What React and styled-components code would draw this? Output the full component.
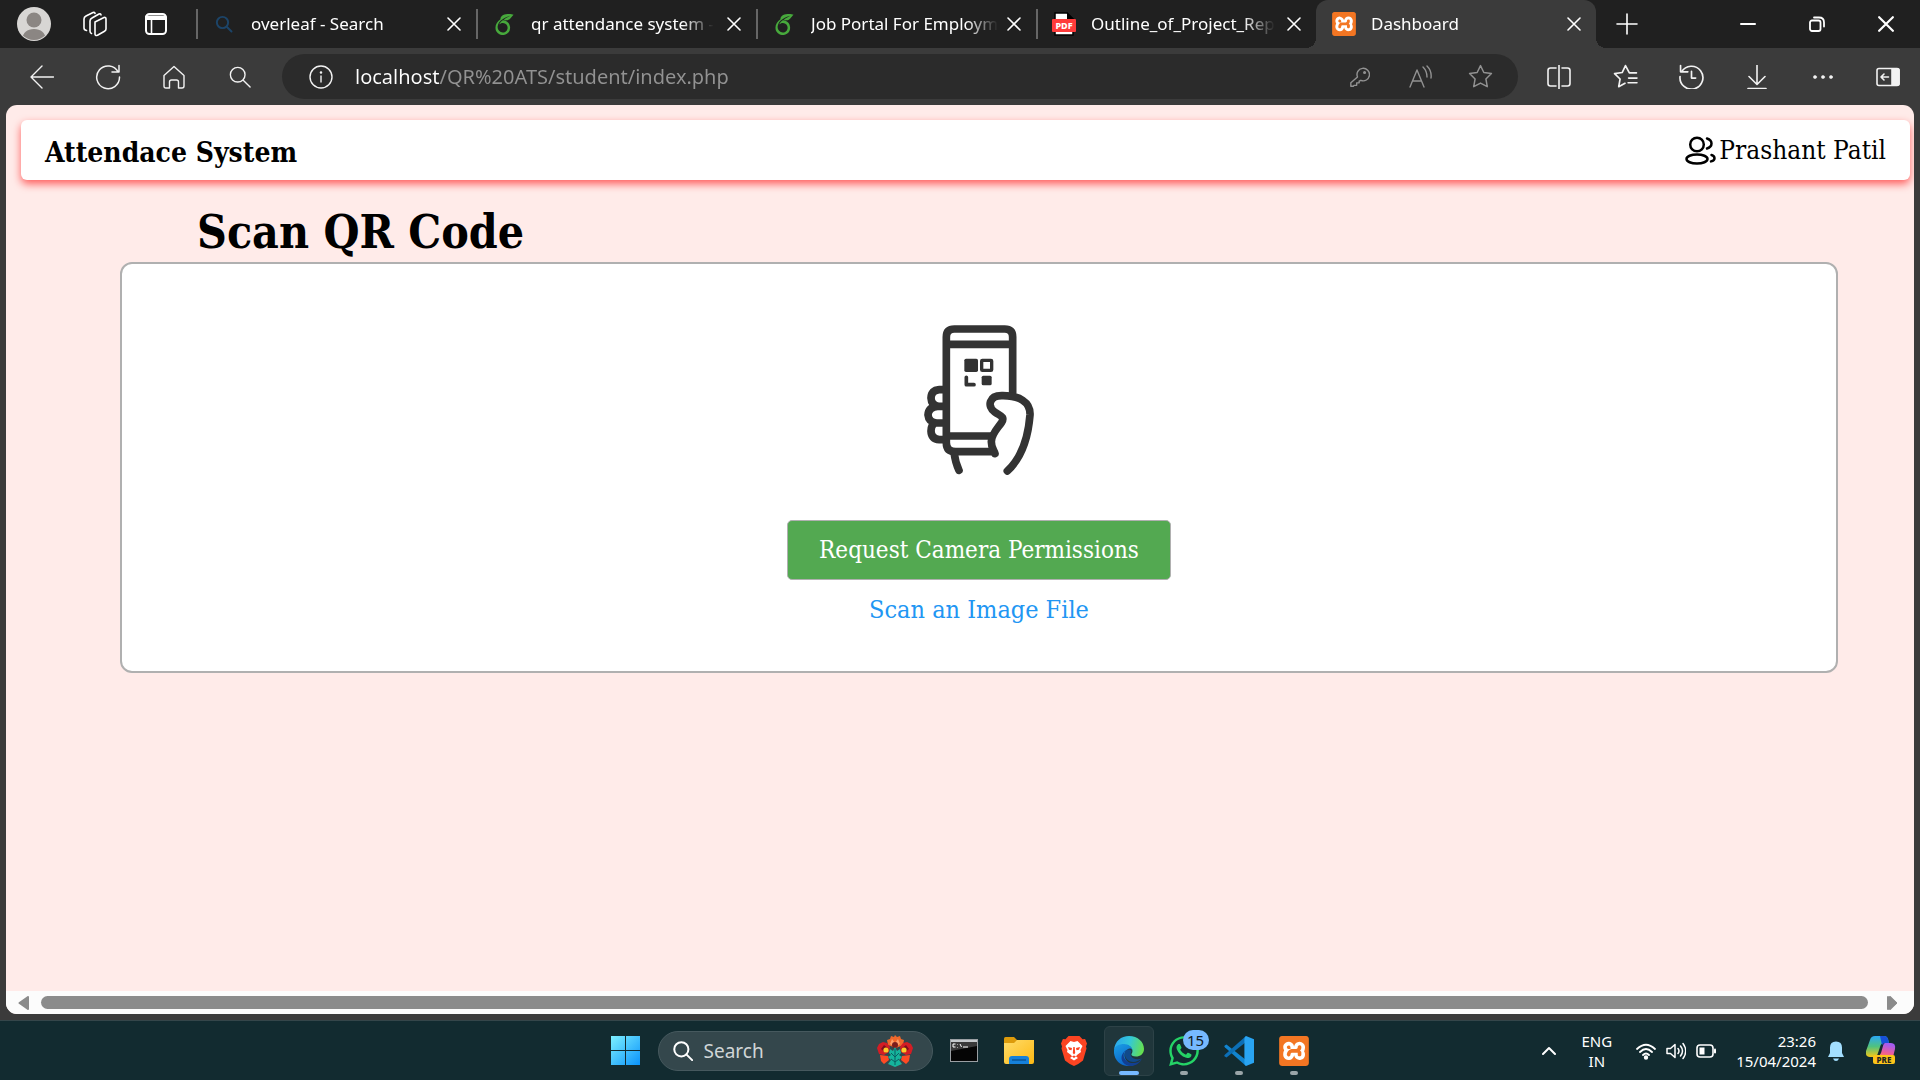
import React from 'react';
import styled, { createGlobalStyle, css } from 'styled-components';
import { SiXampp, SiOverleaf } from 'react-icons/si';
import { FaWhatsapp } from 'react-icons/fa';

const ui = `"Noto Sans", "Open Sans", sans-serif`;
const serif = `"DejaVu Serif Condensed", "DejaVu Serif", serif`;

const Global = createGlobalStyle`
  * { box-sizing: border-box; }
  body { margin: 0; background: #3b3b3b; font-family: ${ui}; overflow: hidden; }
  button, input { font: inherit; color: inherit; border: 0; padding: 0; margin: 0; background: none; outline: none; }
  button { cursor: pointer; }
  h1, h2, p { margin: 0; }
  svg { display: block; flex: none; }
`;

const Screen = styled.div`
  height: 100vh;
  display: flex;
  flex-direction: column;
  background: #3b3b3b;
`;

/* ---------- browser chrome ---------- */

const TabStrip = styled.header`
  height: 48px;
  flex: none;
  display: flex;
  align-items: stretch;
  background: #202020;
  color: #fff;
  padding-left: 3px;
`;

const StripButton = styled.button`
  width: ${(p) => p.$w || 61}px;
  display: flex;
  align-items: center;
  justify-content: center;
`;

const Tabs = styled.nav`
  display: grid;
  grid-template-columns: repeat(5, minmax(0, 1fr));
  flex: 0 1 1400px;
  min-width: 0;
  margin-left: 10px;
`;

const Tab = styled.div`
  position: relative;
  min-width: 0;
  display: flex;
  align-items: center;
  padding-left: ${(p) => (p.$active ? 15 : 0)}px;
  border-radius: 12px 12px 0 0;
  ${(p) =>
    p.$active &&
    css`
      background: #3b3b3b;
      &::before,
      &::after {
        content: '';
        position: absolute;
        bottom: 0;
        width: 10px;
        height: 10px;
      }
      &::before {
        left: -10px;
        background: radial-gradient(circle at 0 0, #202020 10px, #3b3b3b 10px);
      }
      &::after {
        right: -10px;
        background: radial-gradient(circle at 100% 0, #202020 10px, #3b3b3b 10px);
      }
    `}
`;

const TabDivider = styled.span`
  width: 2px;
  height: 30px;
  margin-right: 13px;
  background: #666;
`;

const TabLabel = styled.button`
  flex: 1;
  min-width: 0;
  height: 100%;
  display: flex;
  align-items: center;
  gap: 14px;
  text-align: left;
`;

const Favicon = styled.span`
  width: 26px;
  display: flex;
  justify-content: center;
  flex: none;
`;

const TabText = styled.span`
  flex: 1;
  white-space: nowrap;
  font-size: 17px;
  line-height: 24px;
  mask-image: linear-gradient(90deg, #000 calc(100% - 32px), transparent);
`;

const TabClose = styled.button`
  width: 40px;
  height: 32px;
  margin-right: 2px;
  display: flex;
  align-items: center;
  justify-content: center;
`;

const Grow = styled.span`
  flex: 1;
`;

const Toolbar = styled.div`
  height: 57px;
  flex: none;
  display: flex;
  align-items: center;
  padding-left: 9px;
  color: #f2f2f2;
`;

const ToolButton = styled.button`
  width: ${(p) => p.$w || 66}px;
  height: 44px;
  flex: none;
  display: flex;
  align-items: center;
  justify-content: center;
`;

const AddressBar = styled.label`
  flex: 1;
  height: 45px;
  margin: 0 8px 0 9px;
  padding: 0 8px 0 27px;
  display: flex;
  align-items: center;
  border-radius: 24px;
  background: #2b2b2b;
`;

const AddressInput = styled.input`
  flex: 1;
  min-width: 0;
  margin: 0 22px;
  font-size: 20px;
  line-height: 28px;
  color: #9a9a9a;
  background: linear-gradient(90deg, #fff 85px, #929292 85px);
  background-clip: text;
  -webkit-text-fill-color: transparent;
`;

const AddressButton = styled(ToolButton)`
  width: 60px;
  color: #929292;
`;

/* ---------- web page ---------- */

const Viewport = styled.div`
  flex: 1;
  min-height: 0;
  margin: 0 6px 6px;
  display: flex;
  flex-direction: column;
  border-radius: 11px;
  overflow: hidden;
  background: #ffebe9;
  color: #000;
  font-family: ${serif};
`;

const Page = styled.main`
  flex: 1;
  min-height: 0;
  padding: 15px 4px 0 15px;
`;

const Navbar = styled.header`
  height: 60px;
  padding: 0 24px;
  display: flex;
  align-items: center;
  justify-content: space-between;
  border-radius: 6px;
  background: #fff;
  box-shadow: 0 4px 8px rgba(255, 0, 0, 0.6);
`;

const Brand = styled.h2`
  font-size: 28px;
  line-height: 40px;
  font-weight: 700;
  padding-top: 6px;
`;

const User = styled.a`
  display: flex;
  align-items: center;
  gap: 3px;
  font-size: 26px;
  line-height: 36px;
  color: #000;
  text-decoration: none;
`;

const Scanner = styled.section`
  margin: 22px 72px 0 99px;
`;

const Heading = styled.h1`
  padding-left: 77px;
  font-size: 46px;
  line-height: 60px;
  font-weight: 700;
`;

const Card = styled.div`
  display: flex;
  flex-direction: column;
  align-items: center;
  padding: 61px 20px 43px;
  border: 2px solid #b0b0b0;
  border-radius: 12px;
  background: #fff;
`;

const CameraButton = styled.button`
  height: 60px;
  margin-top: 45px;
  padding: 0 31px;
  border: 1px solid #b0b0b0;
  border-radius: 5px;
  background: #53a951;
  color: #fff;
  font-size: 24px;
  line-height: 36px;
`;

const FileLink = styled.a`
  margin-top: 12px;
  color: #2196f3;
  font-size: 25px;
  line-height: 36px;
  text-decoration: none;
`;

const Scrollbar = styled.div`
  height: 23px;
  flex: none;
  display: flex;
  align-items: center;
  background: #fcfcfc;
`;

const ScrollArrow = styled.button`
  width: ${(p) => p.$w}px;
  height: 23px;
  display: flex;
  align-items: center;
  justify-content: center;
`;

const Thumb = styled.div`
  flex: 1;
  height: 13px;
  border-radius: 7px;
  background: #8b8b8b;
`;

/* ---------- taskbar ---------- */

const Taskbar = styled.footer`
  height: 60px;
  flex: none;
  display: grid;
  grid-template-columns: 1fr auto 1fr;
  align-items: center;
  border-top: 1px solid #35464a;
  background: #122b30;
  color: #fff;
`;

const Dock = styled.div`
  grid-column: 2;
  display: flex;
  align-items: center;
`;

const DockCell = styled.button`
  position: relative;
  width: 50px;
  height: 50px;
  margin: 0 ${(p) => (p.$first ? 7 : 3)}px 0 2px;
  display: flex;
  align-items: center;
  justify-content: center;
  border-radius: 6px;
  border: 1px solid ${(p) => (p.$active ? '#2d4247' : 'transparent')};
  background: ${(p) => (p.$active ? '#20363b' : 'transparent')};
`;

const Running = styled.span`
  position: absolute;
  bottom: 0;
  width: ${(p) => (p.$active ? 20 : 8)}px;
  height: 4px;
  border-radius: 2px;
  background: ${(p) => (p.$active ? '#76b9ff' : '#9aa5a8')};
`;

const Badge = styled.span`
  position: absolute;
  top: 3px;
  right: -1px;
  width: 26px;
  height: 20px;
  border-radius: 10px;
  background: #76b9ff;
  color: #101820;
  font-size: 15px;
  line-height: 20px;
  text-align: center;
`;

const SearchPill = styled.label`
  width: 275px;
  height: 40px;
  margin: 0 4px 0 0;
  padding: 0 19px 0 14px;
  display: flex;
  align-items: center;
  border-radius: 20px;
  border: 1px solid #46595e;
  background: #34474c;
`;

const SearchInput = styled.input`
  flex: 1;
  min-width: 0;
  margin-left: 11px;
  font-size: 19px;
  line-height: 26px;
  &::placeholder {
    color: #d0d6d7;
    opacity: 1;
  }
`;

const Tray = styled.div`
  grid-column: 3;
  justify-self: end;
  display: flex;
  align-items: center;
  padding-right: 24px;
  font-size: 15px;
  line-height: 20px;
`;

const Language = styled.button`
  margin: 0 24px 0 26px;
  text-align: center;
`;

const Status = styled.button`
  display: flex;
  align-items: center;
  gap: 10px;
`;

const Clock = styled.button`
  margin: 0 12px 0 20px;
  text-align: right;
`;

const CopilotButton = styled.button`
  margin-left: 22px;
`;

/* ---------- drawings ---------- */

const Line = ({ size = 24, w = 1.4, vb = '0 0 24 24', width, children }) => (
  <svg width={width || size} height={size} viewBox={vb} fill="none" stroke="currentColor" strokeWidth={w} strokeLinecap="round" strokeLinejoin="round" aria-hidden="true">
    {children}
  </svg>
);

const Cross = ({ size = 14, w = 1.6 }) => (
  <Line size={size} w={w} vb="0 0 14 14"><path d="M1 1l12 12M13 1L1 13" /></Line>
);

const Xampp = ({ size }) => (
  <svg width={size} height={size} viewBox="0 0 24 24" aria-hidden="true">
    <rect x="1.5" y="1.5" width="21" height="21" rx="2" fill="#fff" />
    <SiXampp size={24} color="#f37623" />
  </svg>
);

const Avatar = () => (
  <svg width="34" height="34" viewBox="0 0 34 34" aria-hidden="true">
    <clipPath id="avatar"><circle cx="17" cy="17" r="16" /></clipPath>
    <circle cx="17" cy="17" r="17" fill="#d8d6d4" />
    <g clipPath="url(#avatar)" fill="#8b8683">
      <circle cx="17" cy="13" r="7.5" />
      <path d="M5 34c0-8 5-12 12-12s12 4 12 12z" />
    </g>
  </svg>
);

const PdfIcon = () => (
  <svg width="24" height="24" viewBox="0 0 24 24" aria-hidden="true">
    <path d="M3 1h12l6 6v16H3z" fill="#fff" stroke="#000" strokeWidth="1.5" />
    <path d="M15 0v7h7z" fill="#000" />
    <rect x="0" y="7" width="24" height="13" rx="1" fill="#ff3b3b" />
    <text x="12" y="17" textAnchor="middle" fontFamily="Noto Sans" fontWeight="800" fontSize="9" fill="#fff">PDF</text>
  </svg>
);

const PhoneHand = () => (
  <svg width="110" height="150" viewBox="72 75 330 450" fill="none" stroke="#333" strokeWidth="23" strokeLinejoin="round" aria-hidden="true">
    <path d="M338 288V111q0-24-24-24H163q-24 0-24 24V428q0 27 28 27H278M139 133H338M139 408H274" />
    <path d="M129 269H118q-24 2-25 25 1 23 23 25H129M112 319q-27 3-28 26 2 22 26 24H129M104 369q-11 7-11 24 1 24 25 26H132" />
    <path d="M162 457Q166 488 177 511" strokeLinecap="round" />
    <path strokeLinecap="round" d="M322 513C362 476 384 420 390 345C392 306 358 286 305 287C268 287 260 318 284 336C299 347 316 349 305 367C293 385 274 402 274 425C274 444 281 449 285 461" />
    <g stroke="none" fill="#333">
      <rect x="193" y="176" width="41" height="40" rx="5" />
      <rect x="245" y="227" width="30" height="29" rx="5" />
    </g>
    <rect x="245" y="181" width="30" height="30" rx="2" strokeWidth="10" />
    <path d="M199 232V254H222" strokeWidth="11" strokeLinecap="round" />
  </svg>
);

const EdgeLogo = () => (
  <svg width="30" height="30" viewBox="0 0 30 30" aria-hidden="true">
    <defs>
      <linearGradient id="e1" x1="0" y1="0.3" x2="1" y2="0.5"><stop offset="0" stopColor="#2aa5ee" /><stop offset="0.5" stopColor="#33c8d8" /><stop offset="1" stopColor="#66e04e" /></linearGradient>
      <linearGradient id="e2" x1="0" y1="0" x2="0.5" y2="1"><stop offset="0" stopColor="#1a9fe6" /><stop offset="1" stopColor="#0c63c7" /></linearGradient>
    </defs>
    <path d="M0 14C1 5 7 0 15 0c9 0 15 6 15 13 0 5-4 7.500-8 7.500-3.500 0-5-1.200-4.500-2.500 3-4-1-9-6-9C6 9 1 11 0 14z" fill="url(#e1)" />
    <path d="M0 14c1-4 5-6 10-6 4.500 0 8 3 8.500 6-1-1.500-3-2-4.500-1-7 5-3 14 6 16C9 33-1 25 0 14z" fill="url(#e2)" />
    <path d="M13 13.500c-7 5-2 13.500 6 13.500 4 0 7-1.500 9-4.500-2 5-7 7.500-12 7.500-9-1-12-11-3-16.500z" fill="#123f91" />
    <path d="M11 16c-2 8 8 14 17 6.500-4 1.500-9 1-11-2.500-1-2 0-4 .5-5-2-2-5-2-6.500 1z" fill="#114a8b" />
  </svg>
);

const VsCodeLogo = () => (
  <svg width="30" height="30" viewBox="0 0 30 30" aria-hidden="true">
    <path d="M2.500 8.500L22 24v6L.8 11.200q-1-1 0-1.800z" fill="#1184cf" />
    <path d="M2.500 21.500L22 6V0L.8 18.800q-1 1 0 1.800z" fill="#0c6fb6" />
    <path d="M22 0l8 3.300v23.400L22 30q-1.600-1-1.600-3V3Q20.400 1 22 0z" fill="#29a4f2" />
  </svg>
);

const BraveLogo = () => (
  <svg width="26" height="30" viewBox="0 0 26 30" aria-hidden="true">
    <path d="M7.500 0h11l3 3.300 2.600-.3L26 7.500l-1 3 .5 2-3.500 12Q18 28 13 30 8 28 4 24.500l-3.500-12 .5-2-1-3L1.900 3l2.600.3z" fill="#fb4422" />
    <path d="M13 6l3.500-1 5 5-2 4 .5 2-4 3-1 1.500 2 1.500L13 24.500 9 22l2-1.500-1-1.500-4-3 .5-2-2-4 5-5z" fill="#fff" />
    <path d="M7 11l4 1-.5 2.200-2.500-.5zM19 11l-4 1 .5 2.200 2.500-.5zM12.300 11h1.400l.5 6L13 18.500 11.800 17zM11 20.500l2-1 2 1-2 1.500z" fill="#fb4422" />
  </svg>
);

const FolderLogo = () => (
  <svg width="30" height="27" viewBox="0 0 30 27" aria-hidden="true">
    <defs><linearGradient id="fold" x1="0" y1="0" x2="1" y2="1"><stop offset="0" stopColor="#ffdc6a" /><stop offset="1" stopColor="#fdb913" /></linearGradient></defs>
    <path d="M0 1.500Q0 0 1.500 0H10l3 3v4H0z" fill="#dd9b0b" />
    <path d="M0 6h10l3-3h17v22q0 2-2 2H2q-2 0-2-2z" fill="url(#fold)" />
    <path d="M5 27v-5q0-3 3-3h14q3 0 3 3v5z" fill="#1681da" />
    <path d="M8 23h14" stroke="#0b5697" strokeWidth="1.500" />
  </svg>
);

const TerminalLogo = () => (
  <svg width="28" height="23" viewBox="0 0 28 23" aria-hidden="true">
    <rect x="0.500" y="0.500" width="27" height="22" fill="#050505" stroke="#9a9fa3" />
    <path d="M1 3h26v4L1 12z" fill="#3a3a3a" />
    <rect x="1" y="1" width="26" height="2" fill="#c5c9cc" />
    <path d="M5.500 5H3v3h2.500M7.500 5v.5M7.500 8v.5M10 5l1.500 3M13 8h5" stroke="#fff" strokeWidth="1" fill="none" />
  </svg>
);

const WindowsLogo = () => (
  <svg width="29" height="29" viewBox="0 0 29 29" aria-hidden="true">
    <defs><linearGradient id="win" gradientUnits="userSpaceOnUse" x1="0" y1="0" x2="29" y2="29"><stop offset="0" stopColor="#7df0ff" /><stop offset="1" stopColor="#0a93fb" /></linearGradient></defs>
    <path d="M0 0h14v14H0zM15 0h14v14H15zM0 15h14v14H0zM15 15h14v14H15z" fill="url(#win)" />
  </svg>
);

const Flowers = () => (
  <svg width="36" height="32" viewBox="0 0 36 32" aria-hidden="true">
    <path d="M11 10l-1-5 3-1 1-3 3 1 1-2 2 2 3-1 1 3 3 1-1 5-7 3z" fill="#f0682b" />
    <path d="M13 9l2-5 3 4 3-4 2 5-5 3z" fill="#ffa06a" />
    <circle cx="18" cy="10" r="3" fill="#7c1d1c" />
    <path d="M0 13l2-4 4-2 4 1 3 4-1 5-5 3-5-1zM36 13l-2-4-4-2-4 1-3 4 1 5 5 3 5-1z" fill="#d41d24" />
    <path d="M4 14l3-4 5 4-3 4zM32 14l-3-4-5 4 3 4z" fill="#7c0f1c" />
    <circle cx="9" cy="15" r="2.600" fill="#ffc928" /><circle cx="27" cy="15" r="2.600" fill="#ffc928" />
    <path d="M3 20l8 1 1 4-5 4-3-3zM33 20l-8 1-1 4 5 4 3-3z" fill="#ff4a24" />
    <path d="M18 12l2 4 3-2 1 4-2 2 3 2-3 3 3 4-7 3-7-3 3-4-3-3 3-2-2-2 1-4 3 2z" fill="#16b49c" />
    <path d="M18 14v16M18 22l-4-4M18 22l4-4M18 27l-4-3M18 27l4-3" stroke="#085f62" fill="none" />
  </svg>
);

const Copilot = () => (
  <svg width="30" height="29" viewBox="0 0 30 29" aria-hidden="true">
    <defs>
      <linearGradient id="c1" x1="0" y1="0" x2="0" y2="1"><stop offset="0" stopColor="#2ba8f5" /><stop offset="0.500" stopColor="#4fc27f" /><stop offset="1" stopColor="#f6c915" /></linearGradient>
      <linearGradient id="c2" x1="0.300" y1="0" x2="0" y2="1"><stop offset="0" stopColor="#a45cf0" /><stop offset="0.600" stopColor="#ef5d96" /><stop offset="1" stopColor="#fb8a4b" /></linearGradient>
    </defs>
    <path d="M9 0h9q3 0 4 3l1 4h-5q-3 0-4 4l-2 6q-1 4-5 4H4q-5 0-4-6L4 4q1-4 5-4z" fill="url(#c1)" />
    <path d="M14 0h4q3 0 4 3l1 4h-5l-2 2z" fill="#1750d8" />
    <path d="M19 7h6q5 0 4 6l-2 8H11q3-1 4-4l2-7q.5-3 2-3z" fill="url(#c2)" />
    <rect x="7" y="19" width="22" height="9" rx="2" fill="#fcc419" />
    <text x="18" y="26.500" textAnchor="middle" fontFamily="Noto Sans" fontWeight="800" fontSize="8" fill="#222">PRE</text>
  </svg>
);

const tabs = [
  { title: 'overleaf - Search', icon: <Line size={18} w={2.6}><g stroke="#1c4468"><circle cx="10" cy="10" r="7.500" /><path d="M16 16l6 6" /></g></Line> },
  { title: 'qr attendance system -', icon: <SiOverleaf size={21} color="#47a93c" /> },
  { title: 'Job Portal For Employm', icon: <SiOverleaf size={21} color="#47a93c" /> },
  { title: 'Outline_of_Project_Rep', icon: <PdfIcon /> },
  { title: 'Dashboard', icon: <Xampp size={24} />, active: true },
];

export default function App() {
  return (
    <Screen>
      <Global />
      <TabStrip>
        <StripButton aria-label="Profile"><Avatar /></StripButton>
        <StripButton aria-label="Workspaces">
          <Line size={26} w={1.6} vb="0 0 26 26">
            <path d="M13 11l9-4.500q2-.5 2 1.500v10q0 1.500-1.500 2.200l-7 4Q13 25 13 23z" />
            <path d="M9.500 22.500Q8 22 8 20V10q0-2 2-3l7-4q2-.5 2 1M4.500 19.500Q2 19 2 17V8q0-2 2-3l7-3.500q2-.5 2 1" />
          </Line>
        </StripButton>
        <StripButton aria-label="Tab actions">
          <Line size={22} w={2} vb="0 0 22 22"><rect x="1" y="1" width="20" height="20" rx="3.500" /><path d="M1 3h20v3.500H1z" fill="currentColor" strokeWidth="1" /><path d="M6.500 7v14" strokeWidth="1.600" /></Line>
        </StripButton>
        <Tabs>
          {tabs.map((t) => (
            <Tab key={t.title} $active={t.active}>
              {!t.active && <TabDivider />}
              <TabLabel><Favicon>{t.icon}</Favicon><TabText>{t.title}</TabText></TabLabel>
              <TabClose aria-label="Close tab"><Cross size={14} /></TabClose>
            </Tab>
          ))}
        </Tabs>
        <StripButton aria-label="New tab"><Line size={22} w={1.6} vb="0 0 22 22"><path d="M11 1v20M1 11h20" /></Line></StripButton>
        <Grow />
        <StripButton $w={69} aria-label="Minimize"><Line size={16} w={2} vb="0 0 16 16"><path d="M1 8h14" /></Line></StripButton>
        <StripButton $w={69} aria-label="Restore"><Line size={16} w={1.8} vb="0 0 16 16"><rect x="1" y="4.500" width="10.500" height="10.500" rx="2" /><path d="M5 1.500h5q5 0 5 5v4" /></Line></StripButton>
        <StripButton $w={69} aria-label="Close"><Cross size={16} w={1.9} /></StripButton>
      </TabStrip>

      <Toolbar>
        <ToolButton aria-label="Back"><Line size={24}><path d="M23.500 12H1M12 1L1 12l11 11" /></Line></ToolButton>
        <ToolButton aria-label="Refresh"><Line size={26} w={1.5} vb="0 0 26 26"><path d="M23.200 8A11.400 11.400 0 1 0 24.500 13M24 1.500V8h-7" /></Line></ToolButton>
        <ToolButton aria-label="Home"><Line size={24}><path d="M2 10.500L12 1.500l10 9V21q0 2-2 2h-3.500v-6q0-2-2-2h-5q-2 0-2 2v6H4q-2 0-2-2z" /></Line></ToolButton>
        <ToolButton aria-label="Search"><Line size={22} w={1.5}><circle cx="9.500" cy="9.500" r="8" /><path d="M15.500 15.500l7.500 7.500" /></Line></ToolButton>
        <AddressBar>
          <Line size={24}><circle cx="12" cy="12" r="11" /><path d="M12 11v6" /><circle cx="12" cy="7.500" r="0.600" fill="currentColor" /></Line>
          <AddressInput aria-label="Address" defaultValue="localhost/QR%20ATS/student/index.php" />
          <AddressButton aria-label="Saved passwords"><Line size={20} w={1.7}><path d="M9 12a7.500 7.500 0 1 1 4 4l-2 1v2H8v3H5l-1 1H1v-4z" /><circle cx="17.500" cy="6.500" r="1" /></Line></AddressButton>
          <AddressButton aria-label="Read aloud"><Line size={24}><path d="M2 22L9 5l7 17M4.500 16h9M15 2q4 4 4 10M19 1q5 5 4 12" /></Line></AddressButton>
          <AddressButton aria-label="Add to favorites"><Line size={25}><path d="M12 1.500l3.200 6.700 7.300 1-5.300 5.200 1.300 7.400L12 18.300l-6.500 3.500 1.300-7.400L1.500 9.200l7.300-1z" /></Line></AddressButton>
        </AddressBar>
        <ToolButton aria-label="Split screen"><Line size={24} w={1.6}><path d="M12 0v24M9 3H3.500Q1 3 1 5.500v13Q1 21 3.500 21H9M15 3h5.500Q23 3 23 5.500v13q0 2.500-2.500 2.500H15" /></Line></ToolButton>
        <ToolButton aria-label="Favorites"><Line size={25} w={1.6}><path d="M22.500 8.500h-6.800L12 1.500 8.800 8.200l-7.300 1 5.300 5.200-1.300 7.400 6-3.300M15 13.500h8M14.500 18h8.500" /></Line></ToolButton>
        <ToolButton aria-label="History"><Line size={25} w={1.6}><path d="M2.500 7.500A11 11 0 1 1 1 12M1.500 1.500v6h7M12 7v6.500h4" /></Line></ToolButton>
        <ToolButton aria-label="Downloads"><Line size={24} w={1.6}><path d="M12 0v19M4 11.500l8 8 8-8M3 23.500h18" /></Line></ToolButton>
        <ToolButton aria-label="Settings and more"><Line size={20} vb="0 0 20 20"><g fill="currentColor" strokeWidth="0.500"><circle cx="2" cy="10" r="1.600" /><circle cx="10" cy="10" r="1.600" /><circle cx="18" cy="10" r="1.600" /></g></Line></ToolButton>
        <ToolButton $w={64} aria-label="Sidebar"><Line size={24} w={1.6}><rect x="1" y="3.500" width="22" height="17" rx="2" /><path d="M16 4h6q1 0 1 1v14q0 1-1 1h-6z" fill="currentColor" /><path d="M12.500 12H5M8 9l-3 3 3 3" /></Line></ToolButton>
      </Toolbar>

      <Viewport>
        <Page>
          <Navbar>
            <Brand>Attendace System</Brand>
            <User href="#">
              <svg width="31" height="30" viewBox="0 0 31 30" fill="none" stroke="#000" strokeWidth="2.500" strokeLinecap="round" aria-hidden="true">
                <circle cx="12" cy="9.500" r="6.800" /><ellipse cx="12" cy="24" rx="10.500" ry="4.600" />
                <path d="M22 3.500q4.500 1.500 4.500 5t-4.500 5M26.500 20q3 1 3 3.200t-3.500 3.200" />
              </svg>
              Prashant Patil
            </User>
          </Navbar>
          <Scanner>
            <Heading>Scan QR Code</Heading>
            <Card>
              <PhoneHand />
              <CameraButton>Request Camera Permissions</CameraButton>
              <FileLink href="#">Scan an Image File</FileLink>
            </Card>
          </Scanner>
        </Page>
        <Scrollbar>
          <ScrollArrow $w={35} aria-label="Scroll left"><svg width="12" height="14" viewBox="0 0 12 14"><path d="M10 1v12L1.500 7z" fill="#8b8b8b" stroke="#8b8b8b" strokeWidth="2" strokeLinejoin="round" /></svg></ScrollArrow>
          <Thumb />
          <ScrollArrow $w={46} aria-label="Scroll right"><svg width="12" height="14" viewBox="0 0 12 14"><path d="M5 1v12l6-6z" fill="#8b8b8b" stroke="#8b8b8b" strokeWidth="2" strokeLinejoin="round" /><path d="M3 1v12l8-6z" fill="#8b8b8b" stroke="#8b8b8b" strokeWidth="2" strokeLinejoin="round" /></svg></ScrollArrow>
        </Scrollbar>
      </Viewport>

      <Taskbar>
        <Dock>
          <DockCell $first aria-label="Start"><WindowsLogo /></DockCell>
          <SearchPill>
            <Line size={20} w={2.4}><circle cx="10" cy="10" r="8.500" /><path d="M16 16l7 7" /></Line>
            <SearchInput aria-label="Search" placeholder="Search" />
            <Flowers />
          </SearchPill>
          <DockCell aria-label="Terminal"><TerminalLogo /></DockCell>
          <DockCell aria-label="File Explorer"><FolderLogo /></DockCell>
          <DockCell aria-label="Brave"><BraveLogo /></DockCell>
          <DockCell $active aria-label="Edge"><EdgeLogo /><Running $active /></DockCell>
          <DockCell aria-label="WhatsApp"><FaWhatsapp size={34} color="#25d366" /><Badge>15</Badge><Running /></DockCell>
          <DockCell aria-label="Visual Studio Code"><VsCodeLogo /><Running /></DockCell>
          <DockCell aria-label="XAMPP"><Xampp size={30} /><Running /></DockCell>
        </Dock>
        <Tray>
          <button aria-label="Show hidden icons"><Line size={14} w={2} vb="0 0 14 14"><path d="M1 10l6-6 6 6" /></Line></button>
          <Language>ENG<br />IN</Language>
          <Status aria-label="Network, sound, battery">
            <Line size={20} w={1.8} vb="0 0 20 20"><path d="M1 8q9-8.500 18 0M4 11q6-6 12 0M7 14q3-3 6 0" /><circle cx="10" cy="16.500" r="1.300" fill="currentColor" /></Line>
            <Line size={20} w={1.5} vb="0 0 20 20"><path d="M1 7.500v5h3.500L9 16.500v-13L4.500 7.500zM12 7.500q2 2.500 0 5M14.500 5q4 5 0 10M17 2.500q5.500 7.500 0 15" /></Line>
            <Line size={20} w={1.6} vb="0 0 20 20"><rect x="1" y="4" width="16" height="12" rx="3" /><rect x="3.500" y="6.500" width="5" height="7" fill="currentColor" stroke="none" /><path d="M19 8.500v3" strokeWidth="2" /></Line>
          </Status>
          <Clock>23:26<br />15/04/2024</Clock>
          <button aria-label="Notifications">
            <svg width="16" height="20" viewBox="0 0 16 20"><path d="M8 .5q6 0 6 6v5.500l2 4H0l2-4V6.500q0-6 6-6zM5 17.500h6Q10 20 8 20t-3-2.500z" fill="#a3dfff" /></svg>
          </button>
          <CopilotButton aria-label="Copilot"><Copilot /></CopilotButton>
        </Tray>
      </Taskbar>
    </Screen>
  );
}
